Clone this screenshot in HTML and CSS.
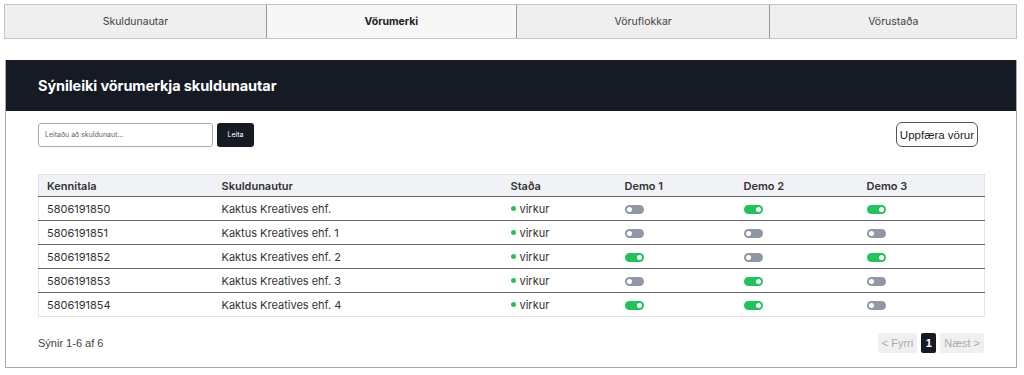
FILE: index.html
```html
<!DOCTYPE html>
<html lang="is">
<head>
    <title>Vörumerki skuldunauta</title>
    <link rel="stylesheet" href="styles.css">
</head>
<body>
    <!-- Tabs -->
    <nav class="tabs">
        <a href="#" class="tab">Skuldunautar</a>
        <a href="#" class="tab active">Vörumerki</a>
        <a href="#" class="tab">Vöruflokkar</a>
        <a href="#" class="tab">Vörustaða</a>
    </nav>

    <!-- Panel -->
    <section class="panel">
        <header class="panel-header">
            <h1>Sýnileiki vörumerkja skuldunautar</h1>
        </header>

        <div class="panel-body">
            <div class="toolbar">
                <form class="search">
                    <input type="text" placeholder="Leitaðu að skuldunaut...">
                    <button type="submit" class="btn-dark">Leita</button>
                </form>
                <button class="btn-outline">Uppfæra vörur</button>
            </div>

            <table class="brands">
                <thead>
                    <tr>
                        <th class="col-id">Kennitala</th>
                        <th class="col-name">Skuldunautur</th>
                        <th class="col-status">Staða</th>
                        <th class="col-demo1">Demo 1</th>
                        <th class="col-demo2">Demo 2</th>
                        <th class="col-demo3">Demo 3</th>
                    </tr>
                </thead>
                <tbody id="rows"></tbody>
            </table>

            <div class="footer">
                <span>Sýnir 1-6 af 6</span>
                <div class="pager">
                    <button class="page disabled">&lt; Fyrri</button>
                    <button class="page current">1</button>
                    <button class="page disabled">Næst &gt;</button>
                </div>
            </div>
        </div>
    </section>

    <script>
        // Debtor data
        const debtors = [
            { id: "5806191850", name: "Kaktus Kreatives ehf.", demos: [0, 1, 1] },
            { id: "5806191851", name: "Kaktus Kreatives ehf. 1", demos: [0, 0, 0] },
            { id: "5806191852", name: "Kaktus Kreatives ehf. 2", demos: [1, 0, 1] },
            { id: "5806191853", name: "Kaktus Kreatives ehf. 3", demos: [0, 1, 0] },
            { id: "5806191854", name: "Kaktus Kreatives ehf. 4", demos: [1, 1, 0] }
        ];

        function renderRows() {
            const body = document.getElementById('rows');
            body.innerHTML = debtors.map(d => `
                <tr>
                    <td>${d.id}</td>
                    <td>${d.name}</td>
                    <td><span class="dot"></span>virkur</td>
                    ${d.demos.map(on => `<td><span class="toggle ${on ? 'on' : ''}"></span></td>`).join('')}
                </tr>
            `).join('');
        }

        document.addEventListener('DOMContentLoaded', renderRows);
    </script>
</body>
</html>
```

FILE: styles.css
```css
:root {
    --dark: #151a25;
    --border: #c4c4c4;
    --green: #22c35a;
    --grey-toggle: #8f97a5;
}

body {
    font-family: 'Inter', 'Liberation Sans', sans-serif;
    margin: 0;
    padding: 4px 7px 0 4px;
    color: #333;
    background: #fff;
}

.tabs {
    display: flex;
    border: 1px solid var(--border);
}

.tab {
    flex: 1 1 auto;
    height: 33px;
    line-height: 33px;
    text-align: center;
    font-size: 10.5px;
    color: #444;
    text-decoration: none;
    background: #efefef;
    border-left: 1px solid #999;
}

.tab:first-child {
    border-left: none;
}

.tab.active {
    background: #f7f7f7;
    font-weight: 700;
    color: #222;
}

.panel {
    margin: 21px 0 0 1px;
    border: 1px solid #aaa;
    border-top: none;
}

.panel-header {
    background: var(--dark);
    height: 51px;
    display: flex;
    align-items: center;
    padding: 0 32px;
}

.panel-header h1 {
    margin: 0;
    color: #fff;
    font-size: 14.5px;
    font-weight: 700;
    letter-spacing: -0.1px;
}

.panel-body {
    padding: 11px 32px 14px 32px;
}

.toolbar {
    display: flex;
    justify-content: space-between;
    align-items: center;
    padding-right: 6px;
}

.search {
    display: flex;
    gap: 4px;
}

.search input {
    width: 175px;
    height: 24px;
    box-sizing: border-box;
    padding: 0 6px;
    font-family: inherit;
    font-size: 7px;
    border: 1px solid #aaa;
    border-radius: 3px;
}

.search input::placeholder {
    color: #666;
}

.btn-dark {
    background: var(--dark);
    color: #fff;
    border: none;
    border-radius: 3px;
    height: 24px;
    width: 37px;
    font-family: inherit;
    font-size: 7px;
    cursor: pointer;
}

.btn-outline {
    background: #fff;
    color: #222;
    border: 1px solid #555;
    border-radius: 6px;
    height: 25px;
    padding: 0 3px;
    font-family: 'Liberation Sans', sans-serif;
    font-size: 11.5px;
    cursor: pointer;
}

.brands {
    width: 946px;
    margin-top: 27px;
    table-layout: fixed;
    border-collapse: collapse;
    border: 1px solid #e2e4e8;
    font-size: 11px;
}

.brands th {
    box-sizing: border-box;
    background: #f1f2f5;
    text-align: left;
    font-weight: 600;
    color: #333;
    height: 22px;
    padding: 0 8px;
    border-bottom: 1px solid #666;
}

.brands td {
    height: 23px;
    padding: 0 8px;
    color: #333;
    border-bottom: 1px solid #666;
}

.brands tr:last-child td {
    border-bottom: 1px solid #e2e4e8;
}

.col-id { width: 175px; }
.col-name { width: 289px; }
.col-status { width: 114px; }
.col-demo1 { width: 119px; }
.col-demo2 { width: 123px; }
.col-demo3 { width: 126px; }

.dot {
    display: inline-block;
    width: 5px;
    height: 5px;
    border-radius: 50%;
    background: var(--green);
    margin-right: 4px;
    vertical-align: 2px;
}

.toggle {
    display: inline-block;
    position: relative;
    width: 19px;
    height: 9px;
    border-radius: 5px;
    background: var(--grey-toggle);
    vertical-align: middle;
}

.toggle::after {
    content: "";
    position: absolute;
    top: 2px;
    left: 2px;
    width: 5px;
    height: 5px;
    border-radius: 50%;
    background: #fff;
}

.toggle.on {
    background: var(--green);
}

.toggle.on::after {
    left: 12px;
}

.footer {
    display: flex;
    justify-content: space-between;
    align-items: center;
    margin-top: 16px;
    font-family: 'Liberation Sans', sans-serif;
    font-size: 11px;
    color: #444;
}

.pager {
    display: flex;
    gap: 4px;
}

.page {
    height: 20px;
    border: none;
    border-radius: 2px;
    padding: 0 4px;
    font-family: 'Liberation Sans', sans-serif;
    font-size: 11px;
    background: #f0f0f0;
    color: #aaa;
}

.page.current {
    background: var(--dark);
    color: #fff;
    font-weight: 700;
    width: 15px;
    padding: 0;
}
```
